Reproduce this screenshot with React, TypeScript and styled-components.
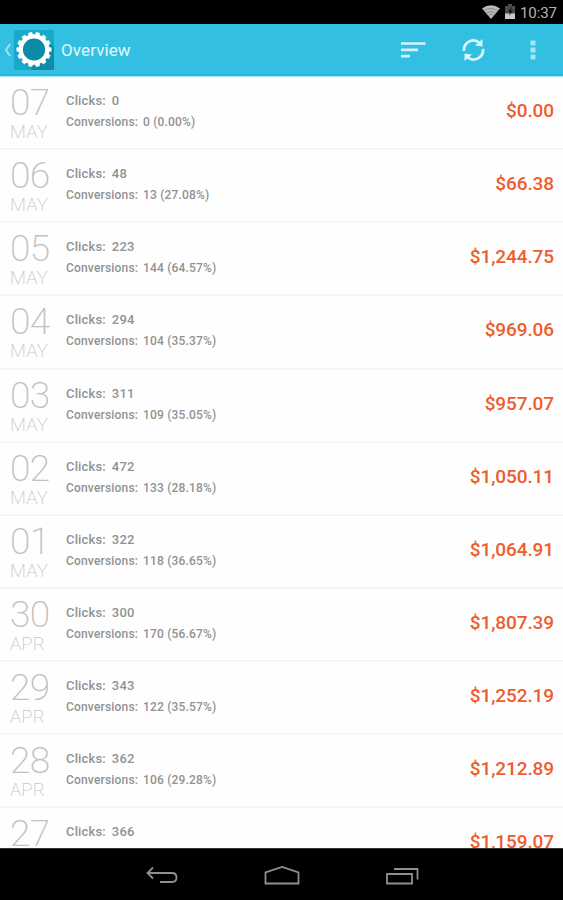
import React from 'react';
import styled, { createGlobalStyle } from 'styled-components';

const GlobalStyle = createGlobalStyle`
  * { box-sizing: border-box; }
  body { margin: 0; background: #fff; font-family: Roboto, 'Noto Sans', sans-serif; }
`;

const Screen = styled.div`
  width: 563px;
  height: 900px;
  display: flex;
  flex-direction: column;
  overflow: hidden;
  background: #fefefe;
`;

const StatusBar = styled.div`
  flex: none;
  height: 24px;
  display: flex;
  justify-content: flex-end;
  align-items: center;
  padding: 0 6px 1px 0;
  background: #000;
  color: #b4b4b4;
`;

const Clock = styled.span`
  width: 37px;
  margin-left: 5px;
  font-size: 15px;
  font-weight: 400;
  line-height: 20px;
  letter-spacing: -0.1px;
  white-space: nowrap;
  padding-top: 2px;
`;

const ActionBar = styled.header`
  flex: none;
  height: 53px;
  display: flex;
  align-items: center;
  background: #33bfe2;
  border-bottom: 1px solid #a5e6f7;
  box-shadow: inset 0 -2px 0 #25b9dc;
`;

const Title = styled.h1`
  flex: 1;
  margin: 0;
  padding: 0 0 0 7px;
  font-size: 17px;
  font-weight: 400;
  line-height: 24px;
  letter-spacing: 0.1px;
  color: #e3f8fd;
`;

const Action = styled.div`
  width: 60px;
  height: 52px;
  display: flex;
  align-items: center;
  justify-content: center;
`;

const List = styled.main`
  flex: 1;
  min-height: 0;
  overflow: hidden;
`;

const Row = styled.div`
  height: 73.14px;
  display: flex;
  border-bottom: 2px solid #f5f5f5;
`;

const DateBlock = styled.div`
  width: 66px;
  padding: 7px 0 0 10px;
  font-weight: 200;
  white-space: nowrap;
`;

const Day = styled.div`
  font-size: 37px;
  line-height: 38px;
  letter-spacing: -0.6px;
  color: #c0c0c0;
`;

const Month = styled.div`
  font-size: 18.5px;
  line-height: 20px;
  letter-spacing: 0.1px;
  color: #c6c6c6;
`;

const Stats = styled.div`
  flex: 1;
  padding-top: 13px;
  font-weight: 500;
  color: #929292;
`;

const Stat = styled.div<{ $small?: boolean }>`
  font-size: ${p => (p.$small ? '12px' : '13px')};
  line-height: ${p => (p.$small ? '22px' : '21px')};
  letter-spacing: ${p => (p.$small ? '0.18px' : '0.15px')};
  display: flex;
  gap: ${p => (p.$small ? '5px' : '6px')};
  white-space: nowrap;
`;

const Amount = styled.div`
  padding: 22px 9px 0 0;
  font-size: 19px;
  font-weight: 500;
  line-height: 24px;
  letter-spacing: -0.1px;
  color: #ee5d2d;
`;

const NavBar = styled.nav`
  flex: none;
  height: 52px;
  display: flex;
  justify-content: center;
  align-items: center;
  gap: 84px;
  padding-top: 5px;
  background: #000;
  border-top: 1px solid #333;
`;

const days = [
  ['07', 'MAY', '0', '0 (0.00%)', '$0.00'],
  ['06', 'MAY', '48', '13 (27.08%)', '$66.38'],
  ['05', 'MAY', '223', '144 (64.57%)', '$1,244.75'],
  ['04', 'MAY', '294', '104 (35.37%)', '$969.06'],
  ['03', 'MAY', '311', '109 (35.05%)', '$957.07'],
  ['02', 'MAY', '472', '133 (28.18%)', '$1,050.11'],
  ['01', 'MAY', '322', '118 (36.65%)', '$1,064.91'],
  ['30', 'APR', '300', '170 (56.67%)', '$1,807.39'],
  ['29', 'APR', '343', '122 (35.57%)', '$1,252.19'],
  ['28', 'APR', '362', '106 (29.28%)', '$1,212.89'],
  ['27', '', '366', '', '$1,159.07'],
];

const TEETH = 14;

const GearLogo = () => (
  <svg width="40" height="40" viewBox="0 0 40 40">
    <rect width="40" height="40" rx="1.5" fill="#16a9ca" />
    <path d="M33 10 40 17V38.500Q40 40 38.500 40H19L10 32Z" fill="#0e8ca8" />
    <circle cx="20" cy="19.500" r="12" fill="#0a8ba6" />
    <circle cx="20" cy="19.500" r="13.200" fill="none" stroke="#fff" strokeWidth="4.200" />
    {Array.from({ length: TEETH }, (_, i) => (
      <path
        key={i}
        d="M17.400 6 18.300 2.200H21.700L22.600 6Z"
        fill="#fff"
        stroke="#fff"
        strokeWidth="0.400"
        strokeLinejoin="round"
        transform={`rotate(${(i + 0.5) * (360 / TEETH)} 20 19.500)`}
      />
    ))}
  </svg>
);

const UpCaret = () => (
  <svg width="14" height="40" viewBox="0 0 14 40">
    <path d="M10 14 6 20 10 26" fill="none" stroke="#a3e3f3" strokeWidth="1.900" />
  </svg>
);

const WifiIcon = () => (
  <svg width="18" height="14" viewBox="0 0 18 14">
    <path d="M0 3.500Q9-3 18 3.500L9 14Z" fill="#b9b9b9" />
    <path d="M2.500 5.500Q9 1.500 15.500 5.500M4.500 8Q9 5 13.500 8M6.500 10.300Q9 8.500 11.500 10.300" fill="none" stroke="#777" strokeWidth="0.700" />
  </svg>
);

const BatteryIcon = () => (
  <svg width="10" height="15" viewBox="0 0 10 15">
    <path d="M3 0H7V2H10V15H0V2H3Z" fill="#4c4c4c" />
    <path d="M0 9.500H10V15H0Z" fill="#c8c8c8" />
    <path d="M7 2.500 3 8H5.200L4 12 8 6.500H5.800Z" fill="#111" />
  </svg>
);

const StatusIcons = styled.div`
  display: flex;
  align-items: center;
  gap: 5px;
`;

const SortIcon = () => (
  <svg width="26" height="18" viewBox="0 0 26 18">
    <path d="M1 2.500H25.500M1 8.800H18M1 15.200H10" stroke="#d2f4fc" strokeWidth="2.700" />
  </svg>
);

const RefreshIcon = () => (
  <svg width="24" height="24" viewBox="0 0 24 24">
    <g fill="none" stroke="#d8f6fd" strokeWidth="2.700">
      <path d="M3 13A9.500 9.500 0 0 1 18.500 4.700" />
      <path d="M22 11A9.500 9.500 0 0 1 6.500 19.300" />
    </g>
    <path d="M21.500 1V8.500L14 7.500Z" fill="#d8f6fd" />
    <path d="M3.500 23V15.500L11 16.500Z" fill="#d8f6fd" />
  </svg>
);

const OverflowIcon = () => (
  <svg width="6" height="20" viewBox="0 0 6 20">
    <path d="M.5 .5H5.500V5.500H.5ZM.5 7.500H5.500V12.500H.5ZM.5 14.500H5.500V19.500H.5Z" fill="#a3e5f5" />
  </svg>
);

export default function App() {
  return (
    <Screen>
      <GlobalStyle />
      <StatusBar>
        <StatusIcons>
          <WifiIcon />
          <BatteryIcon />
        </StatusIcons>
        <Clock>10:37</Clock>
      </StatusBar>
      <ActionBar>
        <UpCaret />
        <GearLogo />
        <Title>Overview</Title>
        <Action><SortIcon /></Action>
        <Action><RefreshIcon /></Action>
        <Action><OverflowIcon /></Action>
      </ActionBar>
      <List>
        {days.map(([day, month, clicks, conversions, amount]) => (
          <Row key={day}>
            <DateBlock>
              <Day>{day}</Day>
              {month && <Month>{month}</Month>}
            </DateBlock>
            <Stats>
              <Stat><span>Clicks:</span><span>{clicks}</span></Stat>
              {conversions && (
                <Stat $small><span>Conversions:</span><span>{conversions}</span></Stat>
              )}
            </Stats>
            <Amount>{amount}</Amount>
          </Row>
        ))}
      </List>
      <NavBar>
        <svg width="36" height="22" viewBox="0 0 36 22" fill="none" stroke="#8f8f8f" strokeWidth="1.800">
          <path d="M9 1.500 3.500 7 9 12.500M3.500 7H28Q32.500 7 32.500 11.500T28 16H16" />
        </svg>
        <svg width="36" height="22" viewBox="0 0 36 22" fill="none" stroke="#8f8f8f" strokeWidth="1.800">
          <path d="M1.500 17.500V6.500L18 1 34.500 6.500V17.500Z" />
        </svg>
        <svg width="36" height="22" viewBox="0 0 36 22" fill="none" stroke="#8f8f8f" strokeWidth="1.800">
          <path d="M3 8H28V17.500H3ZM10 3H33.500V13.500" />
        </svg>
      </NavBar>
    </Screen>
  );
}
